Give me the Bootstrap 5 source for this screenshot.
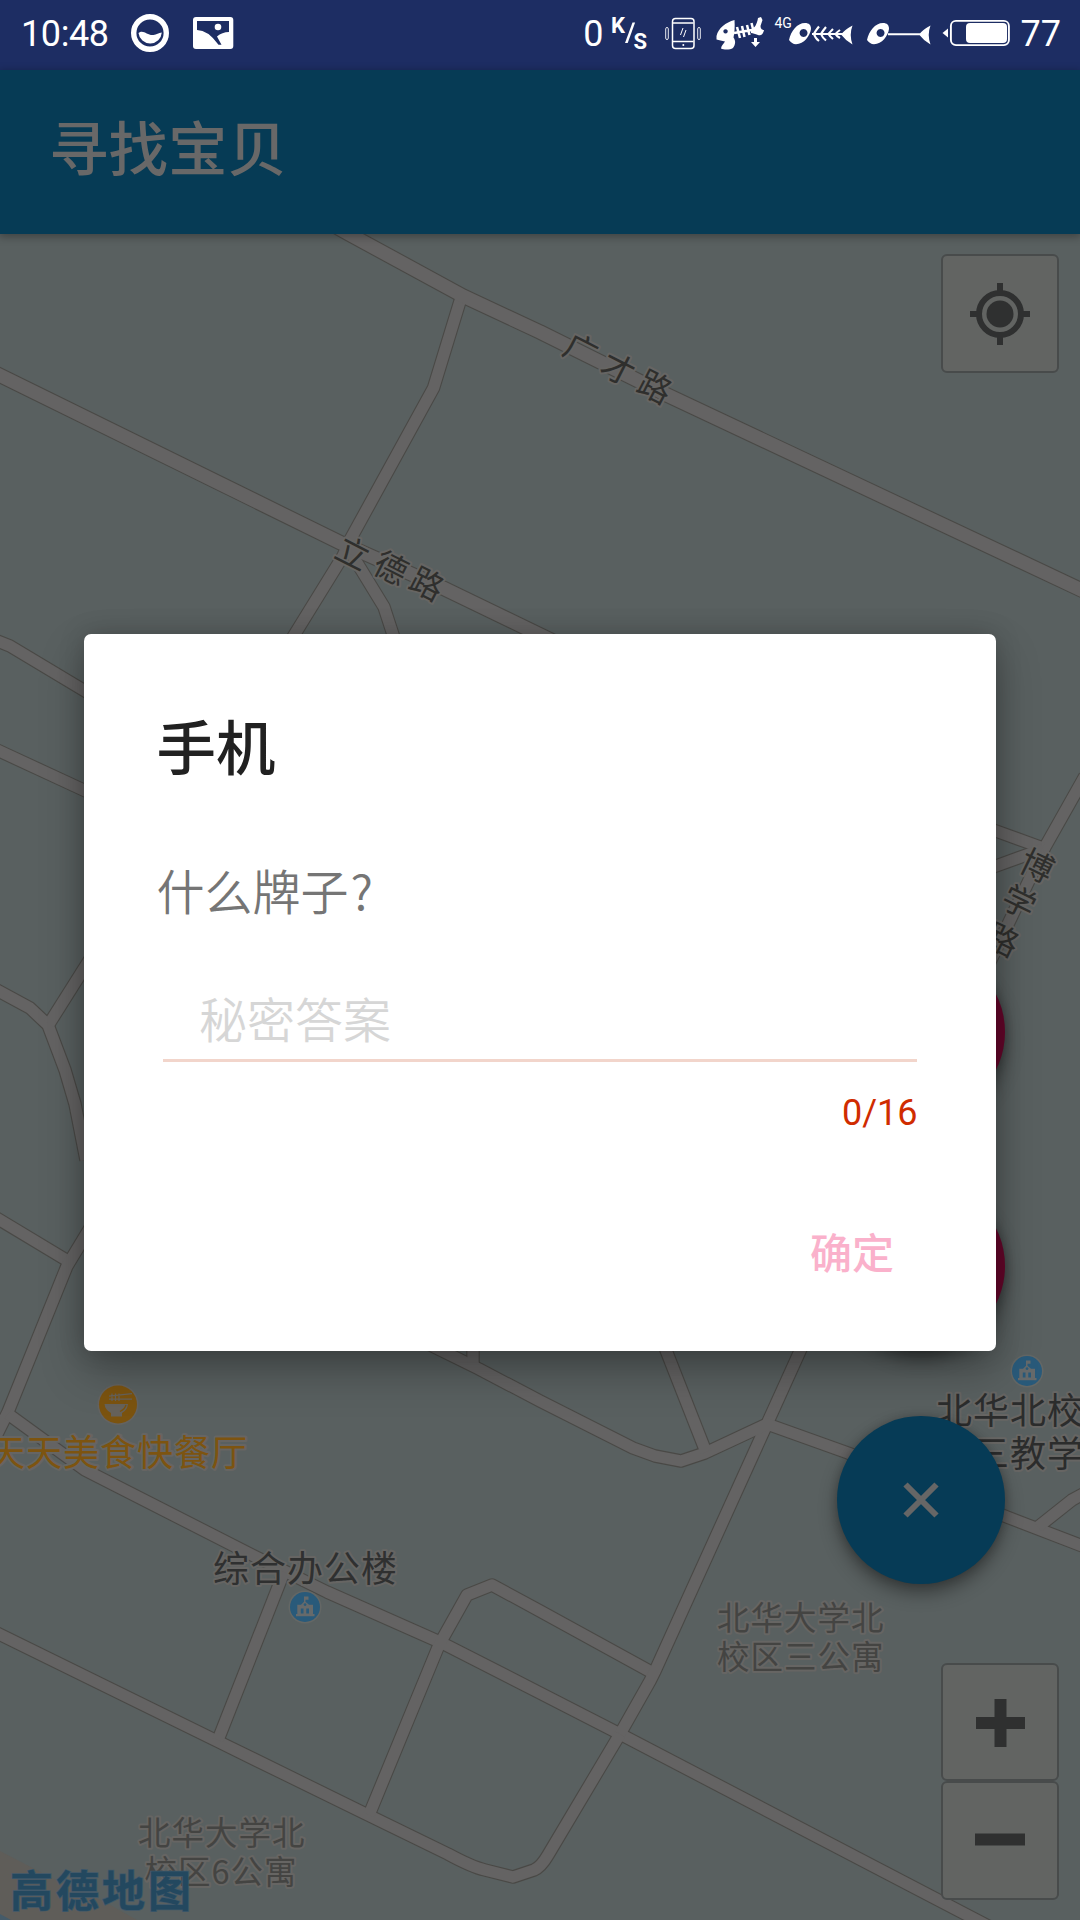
<!DOCTYPE html>
<html lang="zh-CN">
<head>
<meta charset="utf-8">
<meta name="viewport" content="width=device-width, initial-scale=1">
<title>寻找宝贝</title>
<link rel="stylesheet" href="https://cdn.jsdelivr.net/npm/bootstrap@5.3.0/dist/css/bootstrap.min.css">
<style>
body { width:1080px; height:1920px; font-family:Roboto,"Noto Sans CJK SC",sans-serif; background:#596060; }
.statusbar { height:70px; background:#1d2d63; color:#fff; padding:0 19px 4px 21px; font-size:36px; line-height:1; }
.statusbar svg { flex:none; height:38px; }
.statusbar span { padding-top:1px; }
.clock { letter-spacing:-.4px; }
.appbar { height:164px; background:#063b55; color:#686868; padding:0 49px 1px; box-shadow:0 2px 8px 1px rgba(0,0,0,.3); z-index:2; }
.appbar .navbar-brand { font-size:59.5px; font-weight:500; line-height:1; color:inherit; }
.map-canvas { inset:0; width:1080px; height:1686px; }
.roads path { fill:none; stroke-linejoin:round; stroke-linecap:butt; }
.map-label { paint-order:stroke; stroke:#666563; stroke-width:4px; stroke-linejoin:round; }
.tools { padding:20px 21px 20.5px 0; }
.tool-btn { width:118px; height:119px; background:#626462; border:2px solid #484b4b; border-radius:6px; }
.zoom-group .tool-btn { height:118.5px; }
.fab-stack { right:75px; bottom:336px; gap:66px; }
.fab { width:168px; height:168px; border-radius:50%; background:#66062b; border:0; box-shadow:0 9px 18px rgba(0,0,0,.38), 0 0 8px rgba(0,0,0,.16); }
.fab-main { background:#063b56; }
.dialog-layer { inset:65px 0 0 0; z-index:5; }
.dialog { width:912px; height:717px; border:0; border-radius:7px; background:#fff; padding:74px 74px 75px 72.5px; box-shadow:0 20px 44px rgba(0,0,0,.28), 0 0 26px rgba(0,0,0,.18); }
.dialog-title { font-size:59.5px; line-height:84px; font-weight:500; color:#212121; }
.question { font-family:"Noto Sans CJK SC",sans-serif; font-size:48px; font-weight:350; line-height:60px; color:#757575; margin-top:67px; }
.question-mark { margin-left:2px; }
.answer { border:0; border-bottom:3px solid #f2d5cb; border-radius:0; margin:57px 5px 0 6.5px; width:auto; padding:7px 0 0 36px; font-size:48px; font-weight:350; line-height:72px; height:86px; }
.answer::placeholder { color:#d6d6d6; opacity:1; }
.counter { font-size:36px; line-height:42px; color:#d02c00; padding-right:4.5px; margin-top:30px; }
.confirm { font-size:42px; line-height:1; font-weight:500; color:#fab1cb; padding:0; border:0; margin-right:28px; }
</style>
<script src="https://cdn.jsdelivr.net/npm/bootstrap@5.3.0/dist/js/bootstrap.bundle.min.js"></script>
</head>
<body class="d-flex flex-column overflow-hidden position-relative m-0">

<header class="statusbar d-flex align-items-center flex-shrink-0">
  <span class="clock">10:48</span>
  <svg style="margin-left:21px" width="40" viewBox="130 14 40 38"><circle cx="150" cy="33" r="16.3" fill="none" stroke="#fff" stroke-width="5.4"/><path d="M138.5 33c5-4 9 3 15 2 3-.5 5-2 8.300-2.500a11.700 11.700 0 0 1-23.300.500z" fill="#fff"/></svg>
  <svg style="margin-left:23px" width="41" viewBox="193 14 41 38"><rect x="193" y="17" width="40.300" height="32" rx="3" fill="#fff"/><path d="M197 21h32v11q-7 0-12 4.500l4.500 8.300h-3Q208 30 197 30z" fill="#1d2d63"/><circle cx="218" cy="27" r="3.300" fill="#fff"/></svg>
  <span class="ms-auto">0</span>
  <svg style="margin-left:4px" width="42" viewBox="608 14 42 38" fill="#fff" font-family="Roboto"><text x="611" y="33" font-size="22" font-weight="700">K</text><path d="M625 43l7.500-20.500h2.600L627.700 43z"/><text x="633.500" y="48.500" font-size="22" font-weight="700">S</text></svg>
  <svg style="margin-left:14px" width="40" viewBox="664 14 40 38" fill="none" stroke="#fff"><rect x="672.500" y="18.500" width="21.500" height="30" rx="3" stroke-width="1.500"/><path d="M673 23h20.500M673 41.500h20.500" stroke-width="1.500"/><path d="M680.500 35l2.500-7m.5 9l2.500-7" stroke-width="1"/><rect x="665.700" y="27.500" width="2.600" height="12" rx="1.300" stroke-width=".9"/><rect x="697.700" y="27.500" width="2.600" height="12" rx="1.300" stroke-width=".9"/><circle cx="683.300" cy="45" r="1" fill="#fff" stroke="none"/></svg>
  <svg style="margin-left:11px" width="50" viewBox="715 14 50 38" fill="#fff"><path fill-rule="evenodd" d="M716.500 36c2-8 9-13.500 18-16 .5 7 0 13-1 17.500 2.500 3.500 2 7-.5 10.500-3 2-9 2-12 .5.500-3 2-4 4-7-3-1-6-1-8.500-2zM725.500 29.200a2.200 2.200 0 1 0 .1 0z"/><path d="M734 33l18-3M737 27l3 11m2-12l2.500 11m2.500-12l2.500 10m2-12l2 8" fill="none" stroke="#fff" stroke-width="2.500"/><path d="M751 29c4-1 6-5 7-11l3 -1 1.500 3-2 6c0 3 2 4 3.500 4-1 5-4 6-6 5-3-1-5-2-7-2zM754 38h3v4h3l-4.500 5-4.500-5h3z"/></svg>
  <svg style="margin-left:9px" width="80" viewBox="774 14 80 38" fill="#fff"><text x="774.500" y="27.500" font-size="14" font-family="Roboto">4G</text><path fill-rule="evenodd" d="M789 40c2-9 8-17 16-17 4 0 6 2 6 6-1 7-7 15-15 15.300-3 0-5-2-7-4.300zM803.500 29a4 4 0 1 0 .1 0z"/><path d="M812 34h33M819 26.500q-4 5-5 7.500 1 4 5 7M826 27q-4 5-5 7 1 3 5 6.500M833 29q-4 4-4.500 5 1 2 4.500 5M840 30q-4 3-4.500 4 1 2 4.500 4" fill="none" stroke="#fff" stroke-width="2.100"/><path d="M841 34.500q4-5 11.500-9-3.500 9 0 19-7-4-11.500-10z"/></svg>
  <svg style="margin-left:12px" width="66" viewBox="866 14 66 38" fill="#fff"><path fill-rule="evenodd" d="M867 40c2-9 8-17 16-17 4 0 6 2 6 6-1 7-7 15-15 15.300-3 0-5-2-7-4.300zM880.500 29a4 4 0 1 0 .1 0z"/><path d="M888 33.200h33v2h-33zM919 34.500q4-5 11.500-9-3.500 9 0 19-7-4-11.500-10z"/></svg>
  <svg style="margin-left:9px" width="71" viewBox="941 14 71 38"><path d="M942.500 33l5.500-4.500v9z" fill="#fff"/><rect x="950.900" y="20.900" width="58" height="24.200" rx="5" fill="none" stroke="#fff" stroke-width="1.900"/><rect x="966" y="23" width="41" height="20" rx="4" fill="#fff"/></svg>
  <span style="margin-left:9px">77</span>
</header>

<nav class="appbar navbar flex-shrink-0 position-relative">
  <span class="navbar-brand m-0 p-0">寻找宝贝</span>
</nav>

<main class="flex-grow-1 position-relative overflow-hidden">
  <svg class="map-canvas position-absolute" viewBox="0 234 1080 1686" font-family="'Noto Sans CJK SC'">
    <defs>
      <g id="major" class="roads">
        <path d="M333 225L349 234L463 296L540 332L667 395L1090 594"/>
        <path d="M-5 373L341 543L443 588L565 647"/>
      </g>
      <g id="minor" class="roads">
        <path d="M461 298L433.500 388L350 540L343 556L285 650"/>
        <path d="M351 553L384 607L398 650"/>
        <path d="M-5 640L10 646L90 694"/><path d="M-5 749L90 793"/>
        <path d="M-5 989L30 1008L48 1025L65 1070L75 1104L86 1160"/><path d="M49 1024L90 959"/>
        <path d="M-5 1217L68 1261"/><path d="M90 1228L67 1266L8 1412L-6 1440"/>
        <path d="M8 1414L85 1470L248 1553L327 1592L442 1643L540 1693L620 1734L990 1927"/>
        <path d="M-5 1632L217 1741L368 1815L448 1854Q472 1867 485 1870L513 1877L534 1870Q541 1867 548 1855L620 1734"/>
        <path d="M284 1572L218 1740"/>
        <path d="M369 1815L439 1645L467 1595L492 1585L540 1611L653 1673"/>
        <path d="M805 1340L767 1424L655 1671L650 1681L620 1734"/>
        <path d="M420 1340L479 1369L540 1401L633 1448L655 1456L681 1461L705 1453L767 1424L848 1453L1007 1517L1085 1547"/>
        <path d="M473 1340V1366"/><path d="M662 1340L706 1452"/><path d="M1038 1527L1072 1500L1085 1493"/>
        <path d="M1085 776L1045 847L988 966"/><path d="M985 827L1043 848"/><path d="M985 870L1043 849"/>
      </g>
    </defs>
    <rect y="234" width="1080" height="1686" fill="#596060"/>
    <path d="M0 1851L50 1877L105 1902L137 1920H0z" fill="#5f5d59"/><path d="M0 1914L11 1920H0z" fill="#455b69"/>
    <g stroke="#4a4946"><use href="#minor" stroke-width="13.500"/><use href="#major" stroke-width="15.500"/></g>
    <g stroke="#646363"><use href="#minor" stroke-width="11.300"/><use href="#major" stroke-width="13.300"/></g>

    <g font-size="33" fill="#2f2f2d" text-anchor="middle">
      <g class="map-label"><text transform="translate(581 350) rotate(27)" y="12">广</text><text transform="translate(618 369) rotate(27)" y="12">才</text><text transform="translate(655 387) rotate(27)" y="12">路</text></g>
      <g class="map-label"><text transform="translate(353 553) rotate(27)" y="12">立</text><text transform="translate(391 568) rotate(27)" y="12">德</text><text transform="translate(427 584) rotate(27)" y="12">路</text></g>
      <g class="map-label"><text transform="translate(1037 866) rotate(26)" y="12">博</text><text transform="translate(1019 902) rotate(26)" y="12">学</text><text transform="translate(1002 940) rotate(26)" y="12">路</text></g>
    </g>
    <g font-size="36" letter-spacing="1" class="map-label">
      <text x="-11" y="1465.500" fill="#7d5410">天天美食快餐厅</text>
      <text x="213" y="1581.500" fill="#2f3030">综合办公楼</text>
      <text x="936" y="1423.500" fill="#2b2c2c">北华北校</text>
      <text x="973" y="1466.500" fill="#2b2c2c">三教学</text>
    </g>
    <g font-size="32.500" letter-spacing="1" fill="#444442" class="map-label">
      <text x="717" y="1629.500">北华大学北</text><text x="717" y="1668.500">校区三公寓</text>
      <text x="138" y="1844.500">北华大学北</text><text x="144.500" y="1883.500">校区6公寓</text>
    </g>
    <circle cx="118" cy="1404.500" r="20.500" fill="#646361"/><circle cx="118" cy="1404.500" r="19" fill="#7b530f"/>
    <g fill="#66625b"><path d="M104.500 1404h23.500q-.5 6-6 9v3.500h-11v-3.500q-6-3-6.500-9z"/><path d="M109 1396.200l23-2.500M109 1399.200h23M112 1393.500v7.500M115.500 1393.500v7.500M119 1393.500v7.500" fill="none" stroke="#66625b" stroke-width="1.200"/><path d="M126 1405q-1 4-6 6.500" fill="none" stroke="#7b530f" stroke-width="1.300"/></g>
    <g id="school"><circle cx="305" cy="1607" r="16.500" fill="#646765"/><circle cx="305" cy="1607" r="15" fill="#295a7a"/><path fill-rule="evenodd" fill="#666a6b" d="M304 1596.500h4.500v3.200h-3v2l3.500 3h4v9.300h1.500v2.300h-18.500v-2.300h1.300v-9.300h3.700l3-3zM300.800 1608.500v5h2.700v-5zm5.500 0v5h2.700v-5zM305 1603.200a1.400 1.400 0 1 0 .1 0z"/></g>
    <use href="#school" x="722" y="-236"/>
    <text x="10" y="1907" font-size="43" font-weight="700" letter-spacing="3" fill="#23485f" stroke="#40586a" stroke-width="1.500" paint-order="stroke">高德地图</text>
  </svg>

  <div class="tools position-relative h-100 d-flex flex-column justify-content-between align-items-end">
    <button class="tool-btn btn p-0" aria-label="定位"><svg width="62" height="62" viewBox="0 0 62 62"><circle cx="31" cy="31" r="21" fill="none" stroke="#2f3030" stroke-width="6"/><circle cx="31" cy="31" r="13.500" fill="#2f3030"/><path d="M31 0v9M31 53v9M1 31h9M52 31h9" stroke="#2f3030" stroke-width="6"/></svg></button>
    <div class="zoom-group d-flex flex-column">
      <button class="tool-btn btn p-0" aria-label="放大"><svg width="50" height="52" viewBox="0 -1 50 52"><path d="M25.500 2v48M1 26h49" stroke="#2f3030" stroke-width="12"/></svg></button>
      <button class="tool-btn btn p-0" aria-label="缩小"><svg width="50" height="50" viewBox="0 0 50 50"><path d="M0 24.500h50" stroke="#2f3030" stroke-width="12"/></svg></button>
    </div>
  </div>

  <div class="fab-stack position-absolute d-flex flex-column">
    <button class="fab" aria-label="丢失"></button>
    <button class="fab" aria-label="拾到"></button>
    <button class="fab fab-main" aria-label="关闭"><svg width="36" height="36" viewBox="0 0 36 36"><path d="M2.500 2.500l31 31M33.500 2.500l-31 31" stroke="#666" stroke-width="6"/></svg></button>
  </div>
</main>

<div class="dialog-layer position-absolute d-flex align-items-center justify-content-center">
  <section class="dialog modal-content" role="dialog">
    <h1 class="dialog-title m-0">手机</h1>
    <p class="question mb-0">什么牌子<span class="question-mark">?</span></p>
    <input class="answer form-control shadow-none" type="text" maxlength="16" placeholder="秘密答案">
    <div class="counter text-end">0/16</div>
    <div class="mt-auto text-end"><button class="confirm btn">确定</button></div>
  </section>
</div>
</body>
</html>
